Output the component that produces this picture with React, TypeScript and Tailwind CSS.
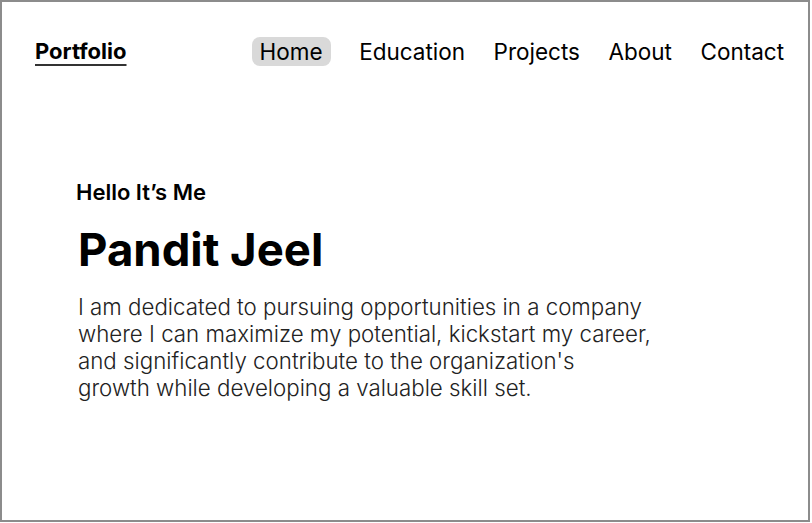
import React from "react";

export default function App() {
  const links = ["Home", "Education", "Projects", "About", "Contact"];
  return (
    <div className="w-[812px] h-[523px] bg-white" style={{ fontFamily: "Inter, 'Noto Sans', sans-serif" }}>
      <div className="w-[810px] h-[522px] border-2 border-[#8c8c8c] bg-white text-black">
        <header className="flex items-center justify-between pl-[33px] pr-[24px] pt-[34px]">
          <a className="text-[22px] font-bold leading-[30px] underline decoration-2 underline-offset-[5px] decoration-[#333]">
            Portfolio
          </a>
          <nav className="flex items-center gap-[28.5px]">
            {links.map((l, i) => (
              <span
                key={l}
                className={
                  "text-[22.5px] leading-[29px] rounded-lg " +
                  (i === 0 ? "bg-[#d9d9d9] px-[8px]" : "")
                }
              >
                {l}
              </span>
            ))}
          </nav>
        </header>
        <main className="pl-[74px] pt-[113px]">
          <h3 className="text-[22px] font-semibold leading-[26px]">Hello It’s Me</h3>
          <h1 className="mt-[17px] text-[45.5px] font-bold leading-[56px] ml-[2px]">Pandit Jeel</h1>
          <p className="mt-[15px] ml-[2px] w-[640px] text-[22.3px] font-light leading-[27px] text-[#222]">
            I am dedicated to pursuing opportunities in a company
            <br />
            where I can maximize my potential, kickstart my career,
            <br />
            and significantly contribute to the organization's
            <br />
            growth while developing a valuable skill set.
          </p>
        </main>
      </div>
    </div>
  );
}
